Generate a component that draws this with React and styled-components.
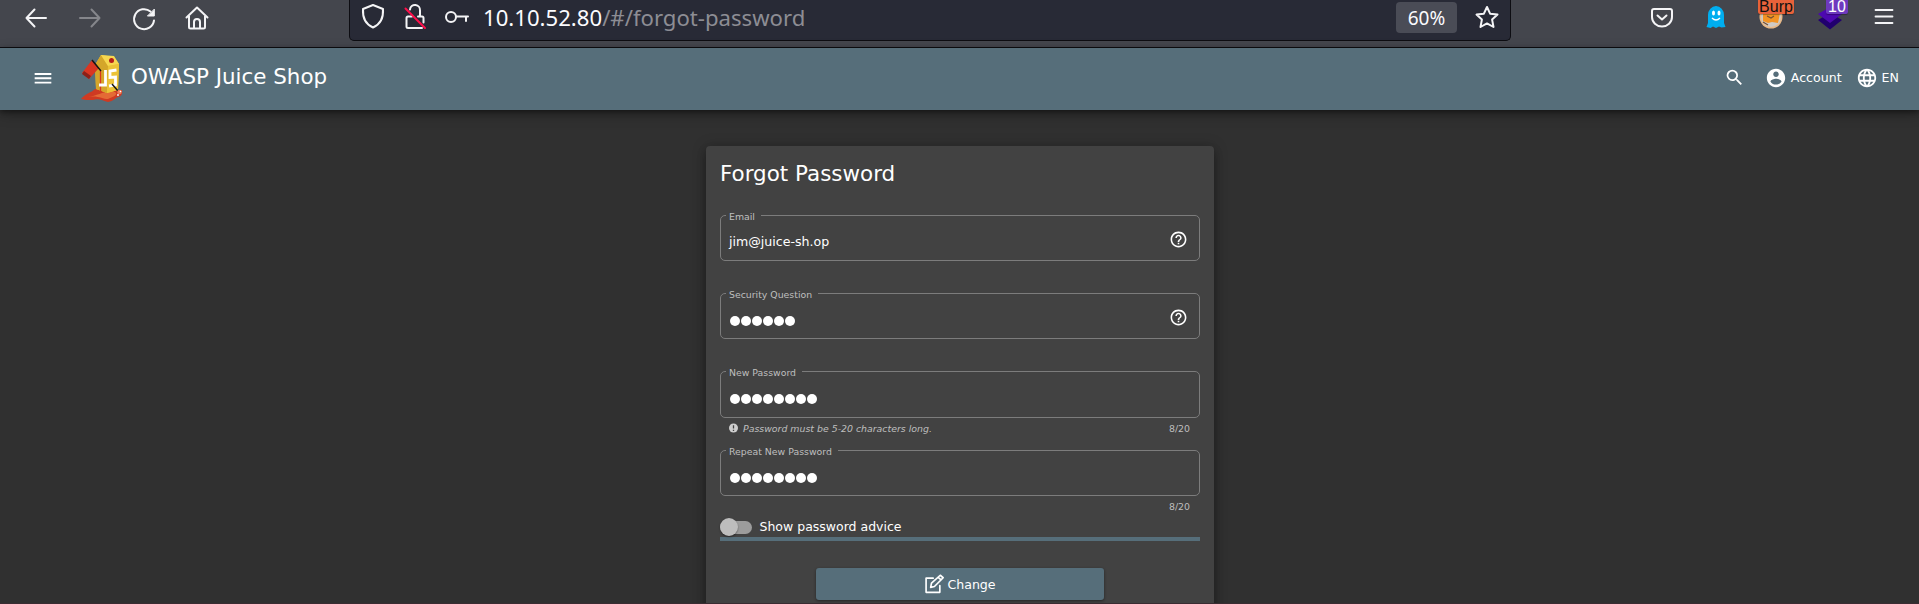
import React from "react";
import styled, { createGlobalStyle } from "styled-components";

const Global = createGlobalStyle`
  * { box-sizing: border-box; }
  html, body { margin: 0; height: 604px; overflow: hidden; background: #303030; }
  body { font-family: "DejaVu Sans", sans-serif; color: #fff; }
  svg { display: block; flex: none; overflow: visible; }
`;

const Page = styled.div`
  width: 1919px; height: 604px; overflow: hidden;
  display: flex; flex-direction: column; background: #303030;
`;
const BrowserBar = styled.div`
  height: 48px; flex: none; display: flex; align-items: flex-start;
  background: #44464d; border-bottom: 1px solid #0d0d12;
  font-family: "Noto Sans", sans-serif;
`;
const NavButtons = styled.div`
  width: 349px; padding: 5px 0 0 24px; display: flex; gap: 29.5px;
`;
const UrlBar = styled.div`
  width: 1162px; height: 41px; flex: none; padding: 0 11px 0 11px;
  display: flex; align-items: flex-start;
  background: #282a36; border: 1px solid #0d0d12; border-top: 0;
  border-radius: 0 0 5px 5px;
`;
const UrlIcons = styled.div`display: flex; gap: 18px; padding-top: 4px; width: 122px;`;
const Url = styled.div`
  flex: 1; font-size: 22.15px; line-height: 34px; white-space: nowrap; color: #8d8d94;
`;
const Host = styled.span`color: #fbfbfe;`;
const Zoom = styled.div`
  width: 61px; height: 31px; margin: 2px 18px 0 0; border-radius: 4px;
  background: #4a4c56; color: #fbfbfe; font-size: 19px; line-height: 32px; text-align: center;
`;
const StarSlot = styled.div`padding-top: 5px;`;
const Extensions = styled.div`
  flex: 1; display: flex; justify-content: flex-end; gap: 30px; padding: 5px 23px 0 0;
`;
const Extension = styled.div`position: relative; width: 24px; height: 24px; margin-right: ${p => p.$after || 0}px;`;
const Badge = styled.span`
  position: absolute; top: -5px; left: ${p => p.$left}px; width: ${p => p.$width}px; height: 14px;
  border-radius: 0 0 2px 2px; background: ${p => p.$bg}; color: ${p => p.$fg};
  font: 16px/13px "Liberation Sans", sans-serif; text-align: center;
  box-shadow: 0 1px 1px rgba(0,0,0,.3);
`;

const Header = styled.header`
  height: 62px; flex: none; display: flex; align-items: center; position: relative; z-index: 1;
  padding: 0 20px 0 33px; background: #566e7a;
  box-shadow: 0 2px 5px rgba(0,0,0,.4), 0 4px 12px rgba(0,0,0,.3);
`;
const LogoSlot = styled.div`margin: 0 8px 2px 28px;`;
const Brand = styled.div`flex: 1; font-size: 21.4px; line-height: 24px; padding-bottom: 4px;`;
const HeaderAction = styled.div`
  display: flex; align-items: center; gap: 4px; margin-left: ${p => p.$gap || 0}px;
  font-size: 12.6px; line-height: 20px; padding-bottom: 3px;
`;

const Content = styled.div`flex: 1; min-height: 0; overflow: hidden;`;
const Card = styled.main`
  width: 508px; height: 470px; margin: 36px 0 0 706px; padding: 14px 14px 0;
  background: #424242; border-radius: 4px;
  box-shadow: 0 6px 10px rgba(0,0,0,.25), 0 1px 14px rgba(0,0,0,.25);
`;
const Title = styled.h1`margin: 0 0 22px; font-size: 21.45px; line-height: 28px; font-weight: 400;`;
const Field = styled.fieldset`
  margin: 0; height: ${p => p.$height}px; min-width: 0; padding: 0 11px 0 8px;
  border: 1px solid #7c7c7c; border-radius: 5px;
  display: flex; align-items: center;
`;
const Legend = styled.legend`
  margin-left: -3px; padding: 0 6px 0 3px; height: 11px;
  font-size: 9.35px; line-height: 13px; color: #bfbfbf; white-space: nowrap;
`;
const Value = styled.div`flex: 1; font-size: 12.6px; line-height: 16px; padding-top: 2px;`;
const Dots = styled.div`flex: 1; display: flex; gap: 1px; padding: 4px 0 0 1px;`;
const Dot = styled.i`width: 9.95px; height: 10px; border-radius: 50%; background: #fff;`;
const HelpSlot = styled.div`padding-bottom: 3px;`;
const Hint = styled.div`
  height: ${p => p.$height}px; padding: 3px 10px 0 9px; display: flex; gap: 5px;
  font-size: 9.38px; line-height: 15px; color: #bfbfbf;
`;
const HintText = styled.em`flex: 1;`;
const ToggleRow = styled.div`
  height: 25px; padding-top: 5px; display: flex; align-items: center; gap: 7.5px; font-size: 12.5px; line-height: 16px;
`;
const Track = styled.div`
  width: 32px; height: 13px; border-radius: 7px; background: #9c9c9c; display: flex; align-items: center;
`;
const Thumb = styled.div`
  width: 18px; height: 18px; border-radius: 50%; background: #bdbdbd; flex: none;
  box-shadow: 0 1px 2px rgba(0,0,0,.4);
`;
const Strength = styled.div`height: 4px; background: #566e7a;`;
const ChangeButton = styled.button`
  display: flex; align-items: center; justify-content: center; gap: 3px;
  width: 288px; height: 32px; margin: 27px auto 0; padding: 0; border: 0; border-radius: 3px;
  background: #566e7a; color: #fff; font: 12.6px "DejaVu Sans", sans-serif;
  box-shadow: 0 1px 3px rgba(0,0,0,.45);
`;
const BottomEdge = styled.div`height: 1px; flex: none; background: #3a2c32;`;

const Line = ({ size = 24, w = 2, color = "#f4f4f6", children }) => (
  <svg width={size} height={size} viewBox="0 0 24 24" fill="none" stroke={color}
    strokeWidth={w} strokeLinecap="round" strokeLinejoin="round">{children}</svg>
);
const Solid = ({ size, d }) => (
  <svg width={size} height={size} viewBox="0 0 24 24" fill="#fff"><path d={d} /></svg>
);

const HELP = "M11 18h2v-2h-2v2zm1-16C6.48 2 2 6.48 2 12s4.48 10 10 10 10-4.48 10-10S17.52 2 12 2zm0 18c-4.41 0-8-3.59-8-8s3.59-8 8-8 8 3.59 8 8-3.59 8-8 8zm0-14c-2.21 0-4 1.79-4 4h2c0-1.1.9-2 2-2s2 .9 2 2c0 2-3 1.75-3 5h2c0-2.25 3-2.5 3-5 0-2.21-1.79-4-4-4z";
const SEARCH = "M15.5 14h-.79l-.28-.27A6.47 6.47 0 0 0 16 9.5 6.5 6.5 0 1 0 9.5 16c1.61 0 3.09-.59 4.23-1.57l.27.28v.79l5 4.99L20.49 19l-4.99-5zm-6 0C7.01 14 5 11.99 5 9.5S7.01 5 9.5 5 14 7.01 14 9.5 11.99 14 9.5 14z";
const ACCOUNT = "M12 2C6.48 2 2 6.48 2 12s4.48 10 10 10 10-4.48 10-10S17.52 2 12 2zm0 3c1.66 0 3 1.34 3 3s-1.34 3-3 3-3-1.34-3-3 1.34-3 3-3zm0 14.2c-2.5 0-4.71-1.28-6-3.22.03-1.99 4-3.08 6-3.08 1.99 0 5.97 1.09 6 3.08-1.29 1.94-3.5 3.22-6 3.22z";
const GLOBE = "M11.99 2C6.47 2 2 6.48 2 12s4.47 10 9.99 10C17.52 22 22 17.52 22 12S17.52 2 11.99 2zm6.93 6h-2.95c-.32-1.25-.78-2.45-1.38-3.56 1.84.63 3.37 1.91 4.33 3.56zM12 4.04c.83 1.2 1.48 2.53 1.91 3.96h-3.82c.43-1.43 1.08-2.76 1.91-3.96zM4.26 14C4.1 13.36 4 12.69 4 12s.1-1.36.26-2h3.38c-.08.66-.14 1.32-.14 2s.06 1.34.14 2H4.26zm.82 2h2.95c.32 1.25.78 2.45 1.38 3.56-1.84-.63-3.37-1.9-4.33-3.56zm2.95-8H5.08c.96-1.66 2.49-2.93 4.33-3.56C8.81 5.55 8.35 6.75 8.03 8zM12 19.96c-.83-1.2-1.48-2.53-1.91-3.96h3.82c-.43 1.43-1.08 2.76-1.91 3.96zM14.34 14H9.66c-.09-.66-.16-1.32-.16-2s.07-1.35.16-2h4.68c.09.65.16 1.32.16 2s-.07 1.34-.16 2zm.25 5.56c.6-1.11 1.06-2.31 1.38-3.56h2.95c-.96 1.65-2.49 2.93-4.33 3.56zM16.36 14c.08-.66.14-1.32.14-2s-.06-1.34-.14-2h3.38c.16.64.26 1.31.26 2s-.1 1.36-.26 2h-3.38z";

const JuiceLogo = () => (
  <svg width="42" height="48" viewBox="0 0 42 48">
    <path d="M0 45 C5 39 10 39 14 35 L34 36 L41 36 Q42 42 37 43 C34 44 33 47 27 48 C22 47 18 44 12 46 C7 46 3 46 0 45Z" fill="#cf3a22" />
    <path d="M7 43 C17 42 23 36 34 38 C38 41 31 43 27 45 C21 45 17 41 7 43Z" fill="#e46a35" />
    <path d="M14 11 L20 1 L33 3 L38 10 L37 36 L26 39 L15 35Z" fill="#e9c02f" />
    <path d="M14 11 L20 1 L27 12 L26 39 L15 35Z" fill="#d4a62a" />
    <path d="M20 1 L33 2 L38 10 L27 12Z" fill="#f6d750" />
    <path d="M27 12 L38 10 L37 36 L26 39Z" fill="#ecc337" />
    <circle cx="30.5" cy="6.5" r="2.5" fill="#b51d18" />
    <path d="M11 6 L18 14 L8 25 L1 19Z" fill="#d93622" />
    <path d="M3 17 L10 22 L8 25 L1 20Z" fill="#8c2018" />
    <path d="M19.5 17 V37" stroke="#d93622" strokeWidth="1.3" />
    <path d="M24.5 16 V31 H18 M35.5 16 L29 17 V23.5 L34.500 23 V31 L28 32" fill="none" stroke="#fff" strokeWidth="2.8" />
    <path d="M11 6 L20 17 M31 30 L37 37" stroke="#151515" strokeWidth="1.5" />
    <circle cx="38.5" cy="38" r="2.3" fill="#ef7d58" /><circle cx="37" cy="41" r=".9" fill="#fff" /><circle cx="39.5" cy="37.5" r=".8" fill="#fff" />
  </svg>
);

const Password = ({ count }) => <Dots>{Array.from({ length: count }, (_, i) => <Dot key={i} />)}</Dots>;
const Help = () => <HelpSlot><Solid size={19} d={HELP} /></HelpSlot>;

export default function App() {
  return (
    <Page>
      <Global />
      <BrowserBar>
        <NavButtons>
          <Line><path d="M2.5 13H22M10.5 4.5 2.5 13l8 8.5" /></Line>
          <Line color="#85868b"><path d="M2 13h19.5M13.5 4.5l8 8.5-8 8.5" /></Line>
          <Line><path d="M23 15.5A10 10 0 1 1 19.5 6.5" /><path d="M23.3 4.5v6.5h-6.5z" fill="#f4f4f6" strokeWidth="1" /></Line>
          <Line><path d="M1.5 12.5 12 2.5l10.5 10M4 11v11a1.5 1.5 0 0 0 1.5 1.5h13A1.5 1.5 0 0 0 20 22V11M9 23v-6a3 3 0 0 1 6 0v6" /></Line>
        </NavButtons>
        <UrlBar>
          <UrlIcons>
            <Line><path d="M12 1 22 5c.5 8-2 15-10 18.5C4 20 1.5 13 2 5z" /></Line>
            <Line>
              <path d="M9 12.500H5a1.500 1.500 0 0 0-1.500 1.500v8.500A1.500 1.500 0 0 0 5 24h14M15 12.500h4a1.500 1.500 0 0 1 1.500 1.500v4.500M7 5.500a5 5 0 0 1 10 1v6" />
              <path d="M2.500 4.500 22 24" stroke="#ff0f4b" />
            </Line>
            <Line><circle cx="6" cy="13" r="5" /><path d="M11 12.5h12M21 13v4" /></Line>
          </UrlIcons>
          <Url><Host>10.10.52.80</Host>/#/forgot-password</Url>
          <Zoom>60%</Zoom>
          <StarSlot>
            <Line><path d="m12 2 3.1 6.7 7.4.9-5.4 5 1.4 7.4-6.5-3.6L5.5 22l1.4-7.4-5.4-5 7.4-.9z" /></Line>
          </StarSlot>
        </UrlBar>
        <Extensions>
          <Line><path d="M4 4h16a2 2 0 0 1 2 2v6a10 9.5 0 0 1-20 0V6a2 2 0 0 1 2-2zM7.5 10.5l4.5 4 4.5-4" /></Line>
          <Extension $after={1}>
            <svg width="24" height="24" viewBox="0 0 24 24">
              <path d="M4 10a8 9 0 0 1 16 0v8l1.5 4-4 .5-2.5-1-3 1.5-3-1.5-2.500 1.500-4-1L4 18z" fill="#00aef0" />
              <ellipse cx="9.5" cy="8" rx="1.5" ry="2.5" fill="#fff" /><ellipse cx="15" cy="8" rx="1.5" ry="2.5" fill="#fff" />
              <path d="M8 13q4 4 8 0" fill="none" stroke="#fff" strokeWidth="1.3" />
            </svg>
          </Extension>
          <Extension $after={5}>
            <svg width="24" height="24" viewBox="0 0 24 24">
              <circle cx="12" cy="12" r="11.5" fill="#e8b886" />
              <circle cx="12" cy="12" r="10" fill="#cfcac5" />
              <path d="M4 7l17 1-2 10-6-1-4 1-5-2z" fill="#f29324" />
              <path d="M8 11l4 2 3-2M4 17l5 3" fill="none" stroke="#755033" strokeWidth="1.2" />
            </svg>
            <Badge $left={-1} $width={36} $bg="#e8623a" $fg="#111">Burp</Badge>
          </Extension>
          <Extension>
            <svg width="24" height="24" viewBox="0 0 24 24">
              <path d="m0 15 12-7 12 7-12 9.5z" fill="#21006e" /><path d="m0 9 12-7 12 7-12 9z" fill="#4d08b0" />
            </svg>
            <Badge $left={8} $width={22} $bg="#6e39be" $fg="#fff">10</Badge>
          </Extension>
          <Line w={1.8}><path d="M3.500 5h17M3.500 11.500h17M3.500 18h17" /></Line>
        </Extensions>
      </BrowserBar>

      <Header>
        <Solid size={20} d="M2 17.5h20v-2.3H2zm0-5.2h20V10H2zm0-7.5v2.3h20V4.8z" />
        <LogoSlot><JuiceLogo /></LogoSlot>
        <Brand>OWASP Juice Shop</Brand>
        <HeaderAction><Solid size={21} d={SEARCH} /></HeaderAction>
        <HeaderAction $gap={20}><Solid size={22} d={ACCOUNT} />Account</HeaderAction>
        <HeaderAction $gap={14}><Solid size={22} d={GLOBE} />EN</HeaderAction>
      </Header>

      <Content>
        <Card>
          <Title>Forgot Password</Title>
          <Field $height={51}><Legend>Email</Legend><Value>jim@juice-sh.op</Value><Help /></Field>
          <Hint $height={27} />
          <Field $height={51}><Legend>Security Question</Legend><Password count={6} /><Help /></Field>
          <Hint $height={27} />
          <Field $height={52}><Legend>New Password</Legend><Password count={8} /></Field>
          <Hint $height={27}>
            <svg width="9" height="14" viewBox="0 0 9 14"><circle cx="4.5" cy="7" r="4.5" fill="#cecece" /><path d="M4.5 4.2v3.4M4.5 8.7v1.2" stroke="#424242" strokeWidth="1.3" /></svg>
            <HintText>Password must be 5-20 characters long.</HintText>8/20
          </Hint>
          <Field $height={51}><Legend>Repeat New Password</Legend><Password count={8} /></Field>
          <Hint $height={16}><HintText />8/20</Hint>
          <ToggleRow><Track><Thumb /></Track>Show password advice</ToggleRow>
          <Strength />
          <ChangeButton>
            <Line size={20} color="#fff"><path d="M11 5H2.5v17H19v-8M8 16l1-5L19.5 1.5l3.5 3L12.5 15z M17 4l3.5 3" /></Line>
            Change
          </ChangeButton>
        </Card>
      </Content>
      <BottomEdge />
    </Page>
  );
}
